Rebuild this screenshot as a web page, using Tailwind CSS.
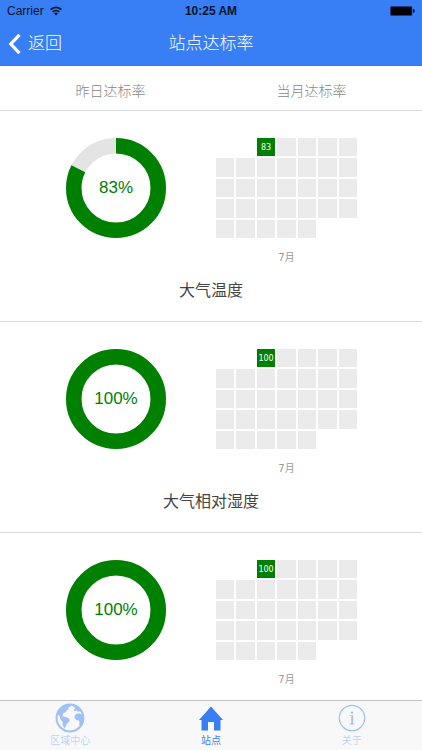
<!DOCTYPE html>
<html lang="zh-CN">
<head>
<meta charset="utf-8">
<meta name="viewport" content="width=device-width, initial-scale=1">
<title>站点达标率</title>
<script src="https://cdn.jsdelivr.net/npm/@tailwindcss/browser@4"></script>
</head>
<body class="flex h-screen flex-col bg-white font-['Liberation_Sans','Noto_Sans_CJK_SC',sans-serif] text-[#444]">
<header class="shrink-0 border-b border-[#3375e6] bg-[#387ef5]">
  <div class="grid h-[22px] grid-cols-3 items-center px-[7px] text-[12px] leading-none text-[#0a1428]">
    <div class="flex items-center gap-1.5">
      <span>Carrier</span>
      <svg class="h-[10px] w-[12px]" viewBox="0 0 12 10" fill="none" stroke="currentColor" stroke-width="1.7" aria-hidden="true">
        <path d="M.6 3.7a7.6 7.6 0 0 1 10.8 0M2.7 5.9a4.7 4.7 0 0 1 6.6 0"/>
        <path d="M6 9.6 4 7.5a2.9 2.9 0 0 1 4 0z" fill="currentColor" stroke="none"/>
      </svg>
    </div>
    <span class="text-center font-bold whitespace-nowrap">10:25 AM</span>
    <svg class="h-[10px] w-[25px] justify-self-end" viewBox="0 0 25 10" aria-hidden="true">
      <rect x=".5" y=".5" width="21.5" height="9" rx="1" fill="#000" stroke="#14408f" stroke-width=".6"/>
      <path d="M23 3.3h.6q1 .2 1 1.7t-1 1.7H23z" fill="#000"/>
    </svg>
  </div>
  <div class="grid h-[43px] grid-cols-3 items-center px-2 text-[17px] font-light text-white">
    <button type="button" class="flex items-center gap-[7px] justify-self-start">
      <svg class="h-5 w-[13px]" viewBox="0 0 13 20" fill="none" stroke="currentColor" stroke-width="3.2" aria-hidden="true"><path d="M11.500 .8 2.800 10l8.700 9.200"/></svg>
      <span>返回</span>
    </button>
    <h1 class="text-center whitespace-nowrap">站点达标率</h1>
  </div>
</header>
<div class="grid h-[45px] shrink-0 grid-cols-2 items-center border-b border-[#d9d9d9] px-2.5 pt-1.5 text-center text-sm font-light text-[#888]">
  <span>昨日达标率</span>
  <span>当月达标率</span>
</div>
<main id="list" class="min-h-0 flex-1 overflow-y-auto [scrollbar-width:none]"></main>
<nav class="grid shrink-0 grid-cols-3 border-t border-[#c0c0c0] bg-[#f8f8f8] text-[10px] leading-3 font-light text-[#387ef5]">
  <a href="#region" class="flex h-[49px] flex-col items-center gap-0.5 pt-0.5 opacity-45">
    <svg class="size-[30px]" viewBox="0 0 30 30" aria-hidden="true">
      <circle cx="15" cy="15" r="13.400" fill="none" stroke="currentColor" stroke-width="2"/>
      <path fill="currentColor" d="M2.500 11Q5.500 3.500 13 1.600l3.500.6-1.300 1.600-2.200.6 1 1.500-2.200 1.300-1 1.700-2.300 1.100-1 2 .3 1.400 1.700.4 3.300.9 1.900 1.800-.5 2.300-2.200 1.800-1.700 3.400-.9 1.500-1.700-3.500-.2-3.300-2-2.300L4.500 13zM28 13.500l-1.200-2.300-2.600-.9-3.200.7-1.600 2.400.5 2.400 1.800 1.400 2.100.1.700 1.700-.2 2.800.8 2.200 1.800-1.200 1.400-4zM16.500 2l5 1.200q4.200 2.300 5.800 6.300l-2.500-1.300-1.700.6-1.700-1.200-2 .7-.6-1.500 1.600-1.300-1.300-1.300z"/>
    </svg>
    <span>区域中心</span>
  </a>
  <a href="#station" aria-current="page" class="flex h-[49px] flex-col items-center gap-0.5 pt-0.5 font-normal">
    <svg class="size-[30px]" viewBox="0 0 30 30" aria-hidden="true"><path fill="currentColor" d="M15 3.500 27 17h-2.500v10.500H18V19h-6v8.500H5.500V17H3z"/></svg>
    <span>站点</span>
  </a>
  <a href="#about" class="flex h-[49px] flex-col items-center gap-0.5 pt-0.5 opacity-45">
    <svg class="size-[30px]" viewBox="0 0 30 30" aria-hidden="true">
      <circle cx="15" cy="15" r="12.700" fill="none" stroke="currentColor" stroke-width="1.200"/>
      <circle cx="15" cy="9.600" r="1.200" fill="currentColor"/>
      <path fill="currentColor" d="M12.900 12.300h3.200v8.300h1.200v.8h-4.600v-.8h1.500v-7.500h-1.300z"/>
    </svg>
    <span>关于</span>
  </a>
</nav>
<script>
const items = [
  { name: '大气温度', rate: 82.5, label: 83 },
  { name: '大气相对湿度', rate: 100, label: 100 },
  { name: '', rate: 100, label: 100 },
];
// July starts on a Tuesday: two leading blanks, 31 days
const month = (value) => {
  let cells = '<span class="col-span-2"></span>';
  for (let day = 1; day <= 31; day++) {
    cells += day === 1
      ? `<span class="flex items-center justify-center bg-[#008000] pt-px text-[8px] leading-none text-white">${value}</span>`
      : '<span class="bg-[#ebebeb]"></span>';
  }
  return cells;
};
document.getElementById('list').innerHTML = items.map((it) => `
  <section class="border-b border-[#d9d9d9] px-2.5 pt-[27px] pb-[18px]">
    <div class="grid grid-cols-2">
      <div class="pl-14">
        <div class="grid size-[100px] place-items-center text-[17px] text-[#008000]">
          <svg class="col-start-1 row-start-1 size-[100px]" viewBox="0 0 100 100" fill="none" stroke-width="15.500" aria-hidden="true">
            <circle cx="50" cy="50" r="42.250" stroke="#e4e4e4"/>
            <circle cx="50" cy="50" r="42.250" stroke="#008000" pathLength="100" stroke-dasharray="${it.rate} ${100 - it.rate}" transform="rotate(-90 50 50)"/>
          </svg>
          <span class="col-start-1 row-start-1">${it.label}%</span>
        </div>
      </div>
      <div class="pl-[5px]">
        <div class="w-[141px] font-['DejaVu_Sans','Noto_Sans_CJK_SC',sans-serif]">
          <div class="grid h-[100px] grid-cols-7 grid-rows-5 gap-0.5">${month(it.label)}</div>
          <p class="mt-3 text-center text-[10px] leading-4 text-[#999]">7月</p>
        </div>
      </div>
    </div>
    ${it.name ? `<h2 class="mt-[13px] text-center text-base leading-6">${it.name}</h2>` : ''}
  </section>`).join('');
</script>
</body>
</html>
